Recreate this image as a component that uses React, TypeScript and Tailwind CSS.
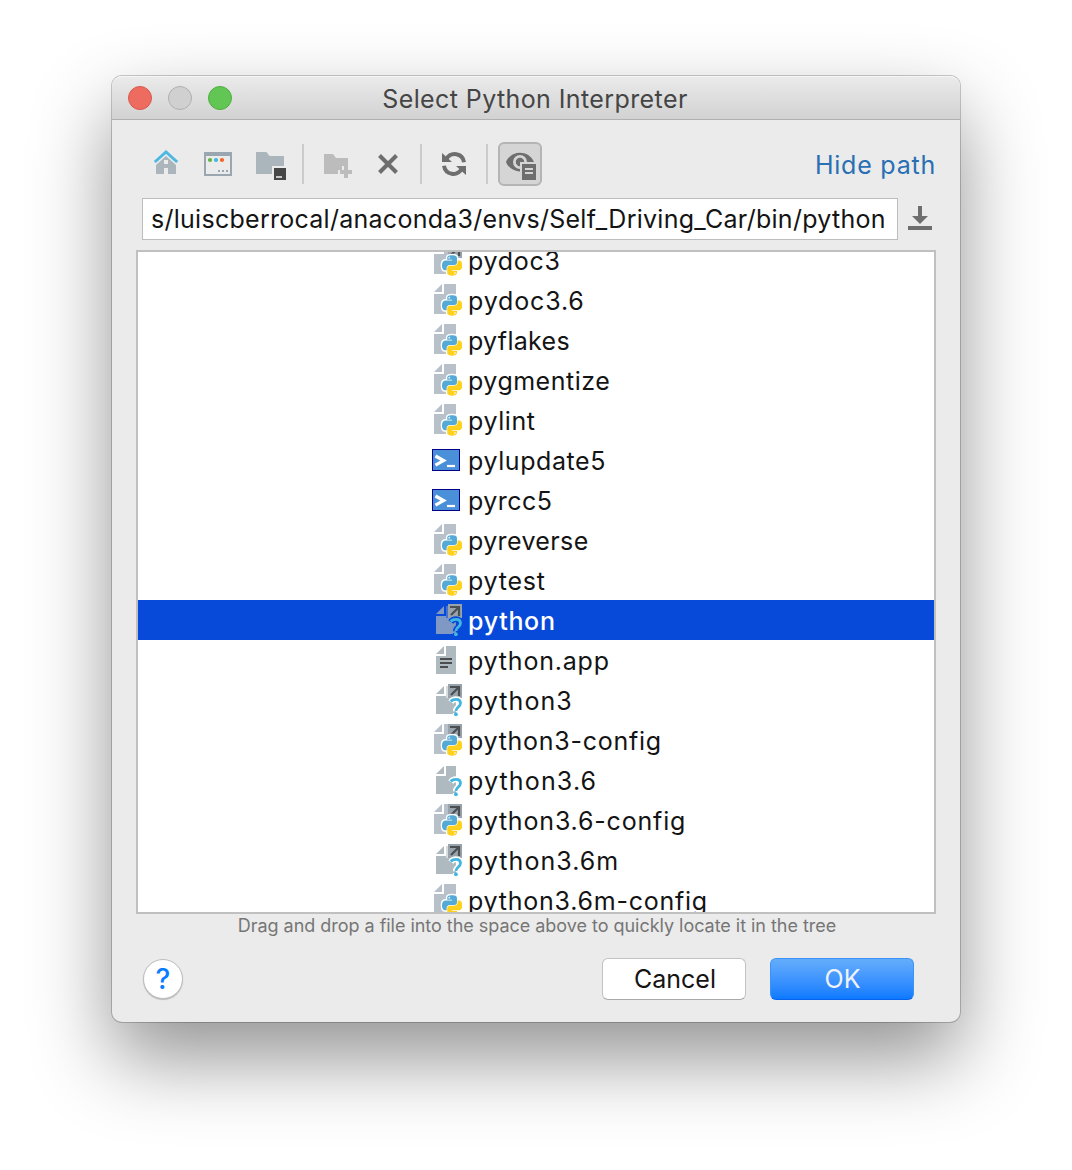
import type { ReactNode } from "react";

type Kind = "py" | "pylink" | "term" | "unk" | "unklink" | "text";

const rows: { name: string; kind: Kind; tracking: string; selected?: boolean }[] = [
  { name: "pydoc3", kind: "pylink", tracking: "tracking-[0.7px]" },
  { name: "pydoc3.6", kind: "py", tracking: "tracking-[0.85px]" },
  { name: "pyflakes", kind: "py", tracking: "tracking-[0.3px]" },
  { name: "pygmentize", kind: "py", tracking: "tracking-[0.5px]" },
  { name: "pylint", kind: "py", tracking: "tracking-[0.6px]" },
  { name: "pylupdate5", kind: "term", tracking: "tracking-[0.58px]" },
  { name: "pyrcc5", kind: "term", tracking: "tracking-[0.45px]" },
  { name: "pyreverse", kind: "py", tracking: "tracking-[0.37px]" },
  { name: "pytest", kind: "py", tracking: "tracking-[0.75px]" },
  { name: "python", kind: "unklink", tracking: "tracking-[0.7px]", selected: true },
  { name: "python.app", kind: "text", tracking: "tracking-[0.8px]" },
  { name: "python3", kind: "unklink", tracking: "tracking-[1.05px]" },
  { name: "python3-config", kind: "pylink", tracking: "tracking-[0.73px]" },
  { name: "python3.6", kind: "unk", tracking: "tracking-[1.15px]" },
  { name: "python3.6-config", kind: "pylink", tracking: "tracking-[0.82px]" },
  { name: "python3.6m", kind: "unklink", tracking: "tracking-[1.05px]" },
  { name: "python3.6m-config", kind: "py", tracking: "tracking-[0.76px]" },
];

const SNAKE_TOP =
  "M54.92.001C50.335.022 45.958.413 42.106 1.095 30.76 3.099 28.7 7.295 28.7 15.032v10.219h26.813v3.406H18.638c-7.793 0-14.616 4.684-16.75 13.594-2.462 10.213-2.571 16.586 0 27.25 1.905 7.938 6.457 13.594 14.25 13.594h9.219v-12.25c0-8.85 7.657-16.657 16.75-16.657h26.781c7.455 0 13.406-6.138 13.406-13.625v-25.53c0-7.267-6.13-12.726-13.406-13.938C64.282.328 59.502-.02 54.92.001zm-14.5 8.219c2.77 0 5.031 2.299 5.031 5.125 0 2.817-2.262 5.094-5.031 5.094-2.78 0-5.032-2.277-5.032-5.094 0-2.826 2.252-5.125 5.031-5.125z";
const SNAKE_BOTTOM =
  "M85.638 28.657v11.906c0 9.231-7.826 17-16.75 17H42.106c-7.336 0-13.406 6.279-13.406 13.625v25.531c0 7.266 6.319 11.54 13.406 13.625 8.488 2.496 16.627 2.947 26.782 0 6.75-1.954 13.406-5.888 13.406-13.625V86.5H55.513v-3.405H95.7c7.793 0 10.696-5.436 13.406-13.594 2.8-8.399 2.68-16.476 0-27.25-1.925-7.758-5.604-13.594-13.406-13.594zM70.575 93.313c2.78 0 5.031 2.278 5.031 5.094 0 2.827-2.251 5.125-5.031 5.125-2.77 0-5.031-2.298-5.031-5.125 0-2.816 2.261-5.094 5.031-5.094z";

function FileIcon({ kind, bg }: { kind: Kind; bg: string }) {
  const py = kind === "py" || kind === "pylink";
  const unk = kind === "unk" || kind === "unklink";
  const link = kind === "pylink" || kind === "unklink";
  const grey = bg === "#ffffff" ? "#afb9c0" : "#8098c4";
  if (kind === "term")
    return (
      <svg className="h-8 w-8 shrink-0" viewBox="0 0 32 32">
        <rect x="2.5" y="5.5" width="27" height="21" fill="#4a90d9" stroke="#00008b" />
        <path d="M5.5 12L13.6 16.6L5.5 21.2" fill="none" stroke="#fff" strokeWidth="3.2" />
        <path d="M17 22H25" stroke="#fff" strokeWidth="2.2" />
      </svg>
    );
  return (
    <svg className="h-8 w-8 shrink-0" viewBox="0 0 32 32">
      {py ? (
        <path d="M4 8L12 0V8ZM14 0H26V30H4V10H14Z" fill="#b8c1c9" />
      ) : (
        <path d="M6 10L14 2V10ZM16 2H26V30H6V12H16Z" fill={grey} />
      )}
      {kind === "text" && <path d="M10 15H22M10 19H22M10 23H18" stroke="#4d4d4f" strokeWidth="2" />}
      {link && (
        <>
          <path d="M16 0H18V14H16Z" fill={bg} opacity={py ? 0 : 0.5} />
          <rect x="18" width="14" height="14" fill="#98a3ac" />
          <path d="M20 3H29V12M29 3L21 11" fill="none" stroke="#4b4e52" strokeWidth="2.2" />
        </>
      )}
      {py && (
        <g transform="translate(12 11.2) scale(.182)">
          <g stroke={bg} strokeWidth="15" strokeLinejoin="round" fill={bg}>
            <path d={SNAKE_TOP} />
            <path d={SNAKE_BOTTOM} />
          </g>
          <path d={SNAKE_TOP} fill="#54aad6" />
          <path d={SNAKE_BOTTOM} fill="#ffd01c" />
        </g>
      )}
      {unk && (
        <g fill="none">
          <path d="M20.8 18C22 16.2 24 15.3 26 15.3C29 15.3 30.7 17 30.7 19.3C30.7 23.3 25.9 23 25.9 27.2M25.9 29V32" stroke={bg} strokeWidth="6" />
          <path d="M20.6 17.4C22 16.1 24 15.4 26 15.4C29 15.4 30.5 17 30.5 19.3C30.5 23.1 25.9 23 25.9 27" stroke="#40b6e0" strokeWidth="2.8" />
          <circle cx="25.9" cy="30.2" r="1.9" fill="#40b6e0" />
        </g>
      )}
    </svg>
  );
}

function Icon({ children }: { children: ReactNode }) {
  return (
    <svg className="h-8 w-8 shrink-0" viewBox="0 0 32 32" fill="none">
      {children}
    </svg>
  );
}

function Separator({ className }: { className: string }) {
  return <div className={`h-10 w-0.5 shrink-0 bg-[#cbcbcb] ${className}`} />;
}

function Toolbar() {
  return (
    <div className="flex h-11 items-center pl-[38px] pr-6">
      <Icon>
        <path d="M4.8 14L16 4L27.2 14" stroke="#4db8e2" strokeWidth="3" />
        <path d="M16 8L26 17V26H18V20H14V26H6V17ZM14 12V16H18V12Z" fill="#aab5bc" fillRule="evenodd" />
      </Icon>
      <div className="ml-5 flex">
        <Icon>
          <path d="M2 4H30V28H2ZM4 8V26H28V8Z" fill="#9aa7b0" fillRule="evenodd" />
          <circle cx="8" cy="12" r="2.1" fill="#62b543" />
          <circle cx="14" cy="12" r="2.1" fill="#40b6e0" />
          <circle cx="20" cy="12" r="2.1" fill="#f26522" />
          <path d="M16 23H18M20 23H22M24 23H26" stroke="#9aa7b0" strokeWidth="2" />
        </Icon>
      </div>
      <div className="ml-5 flex">
        <Icon>
          <path d="M2 4H12C14 4 14 8 16.5 8H30V18H18V26H2Z" fill="#aab5bc" />
          <rect x="20" y="20" width="12" height="12" fill="#464646" />
          <path d="M22 29H28" stroke="#c8c8c8" strokeWidth="2" />
        </Icon>
      </div>
      <Separator className="ml-4" />
      <div className="ml-4 flex">
        <Icon>
          <path d="M4 6H13L16 10H28V18H22V22H18V26H4Z" fill="#bcbcbc" />
          <path d="M26 18V30M20 24H32" stroke="#bcbcbc" strokeWidth="4" />
        </Icon>
      </div>
      <div className="ml-5 flex">
        <Icon>
          <path d="M7.5 7.5L24.5 24.5M24.5 7.5L7.5 24.5" stroke="#6e6e6e" strokeWidth="4" />
        </Icon>
      </div>
      <Separator className="ml-4" />
      <div className="ml-4 flex">
        <Icon>
          <path d="M8 11.5C13 3 24.5 5 26 14.2M24 20.5C19 29 7.5 27 6 17.8" stroke="#6e6e6e" strokeWidth="4" />
          <path d="M4 5V14H14ZM28 27V18H18Z" fill="#6e6e6e" />
        </Icon>
      </div>
      <Separator className="ml-4" />
      <div className="ml-2.5 flex h-11 w-11 items-center justify-center rounded-md border-2 border-[#b4b4b4] bg-[#d5d5d5]">
        <Icon>
          <path d="M2 14C7 1.500 25 1.500 30 14C25 26.500 7 26.500 2 14Z" fill="#6e6e6e" />
          <circle cx="16" cy="14" r="5.6" stroke="#d5d5d5" strokeWidth="2.8" fill="#6e6e6e" />
          <path d="M16 14H32V32H16Z" fill="#d5d5d5" />
          <path d="M18 16H32V32H18Z" fill="#6e6e6e" />
          <path d="M21 21H29M21 25H29" stroke="#d5d5d5" strokeWidth="2" />
        </Icon>
      </div>
      <div className="ml-auto pt-0.5 text-[25px] leading-8 tracking-[0.78px] text-[#286fb4]">Hide path</div>
    </div>
  );
}

export default function App() {
  return (
    <div className="flex h-[1170px] w-[1072px] items-start overflow-hidden bg-white pl-28 pt-[76px] font-['Inter',sans-serif] text-[#141414]">
      <div className="flex h-[946px] w-[848px] flex-col rounded-[10px] bg-[#ebebeb] shadow-[0_0_0_1px_rgba(0,0,0,0.2),0_36px_80px_rgba(0,0,0,0.43)]">
        <div className="relative flex h-11 shrink-0 items-center gap-4 rounded-t-[10px] border-b border-[#b1b1b1] bg-linear-to-b from-[#ebebeb] to-[#d2d2d2] pl-4 pt-px shadow-[inset_0_1px_0_#f5f5f5]">
          <span className="h-6 w-6 rounded-full border border-[#d9584f] bg-[#ee6b60]" />
          <span className="h-6 w-6 rounded-full border border-[#b0b0b0] bg-[#d0d0d0]" />
          <span className="h-6 w-6 rounded-full border border-[#4fae3f] bg-[#62c654]" />
          <div className="absolute inset-x-0 top-[7px] pr-[2px] text-center text-[25px] leading-8 tracking-[0.4px] text-[#454545]">
            Select Python Interpreter
          </div>
        </div>
        <div className="h-[22px] shrink-0" />
        <Toolbar />
        <div className="mt-3 flex items-center pl-[30px]">
          <div className="flex h-[42px] w-[756px] items-center overflow-hidden whitespace-nowrap border border-[#bdbdbd] bg-white pl-2 pt-0.5 text-[25px] tracking-[0.27px]">
            s/luiscberrocal/anaconda3/envs/Self_Driving_Car/bin/python
          </div>
          <svg className="mb-0.5 ml-1.5 h-8 w-8" viewBox="0 0 32 32" fill="#6e6e6e">
            <path d="M14 4H18V14H24L16 22L8 14H14ZM4 24H28V28H4Z" />
          </svg>
        </div>
        <div className="ml-6 mt-2.5 h-[664px] w-[800px] shrink-0 overflow-hidden border-2 border-[#c0c0c0] bg-white">
          <div className="-mt-3">
            {rows.map((r) => (
              <div
                key={r.name}
                className={`flex h-10 items-center pl-[292px] text-[25px] ${r.selected ? "bg-[#074ad9] font-medium text-white" : ""}`}
              >
                <FileIcon kind={r.kind} bg={r.selected ? "#074ad9" : "#ffffff"} />
                <span className={`ml-1.5 pt-0.5 leading-[38px] ${r.tracking}`}>{r.name}</span>
              </div>
            ))}
          </div>
        </div>
        <div className="text-center text-[18px] leading-6 tracking-[-0.03px] text-[#767676]">
          <span className="pl-[2px]">Drag and drop a file into the space above to quickly locate it in the tree</span>
        </div>
        <div className="mt-5 flex items-center pl-[31px] pr-[46px]">
          <div className="flex h-10 w-10 items-center justify-center rounded-full border border-[#bdbdbd] bg-white text-[28px] font-medium text-[#0a7cff] shadow-[0_1px_1px_rgba(0,0,0,0.2)]">
            ?
          </div>
          <div className="ml-auto flex h-[42px] w-36 items-center justify-center rounded-md border border-[#c2c2c2] border-b-[#a8a8a8] bg-white pl-[2px] pt-0.5 text-[25px]">
            Cancel
          </div>
          <div className="ml-6 flex h-[42px] w-36 items-center justify-center rounded-md border border-[#3a93f8] border-b-[#0a62f0] bg-linear-to-b from-[#64adfb] to-[#0a7aff] pl-px pt-0.5 text-[25px] text-[#f0f2f6]">
            OK
          </div>
        </div>
      </div>
    </div>
  );
}
